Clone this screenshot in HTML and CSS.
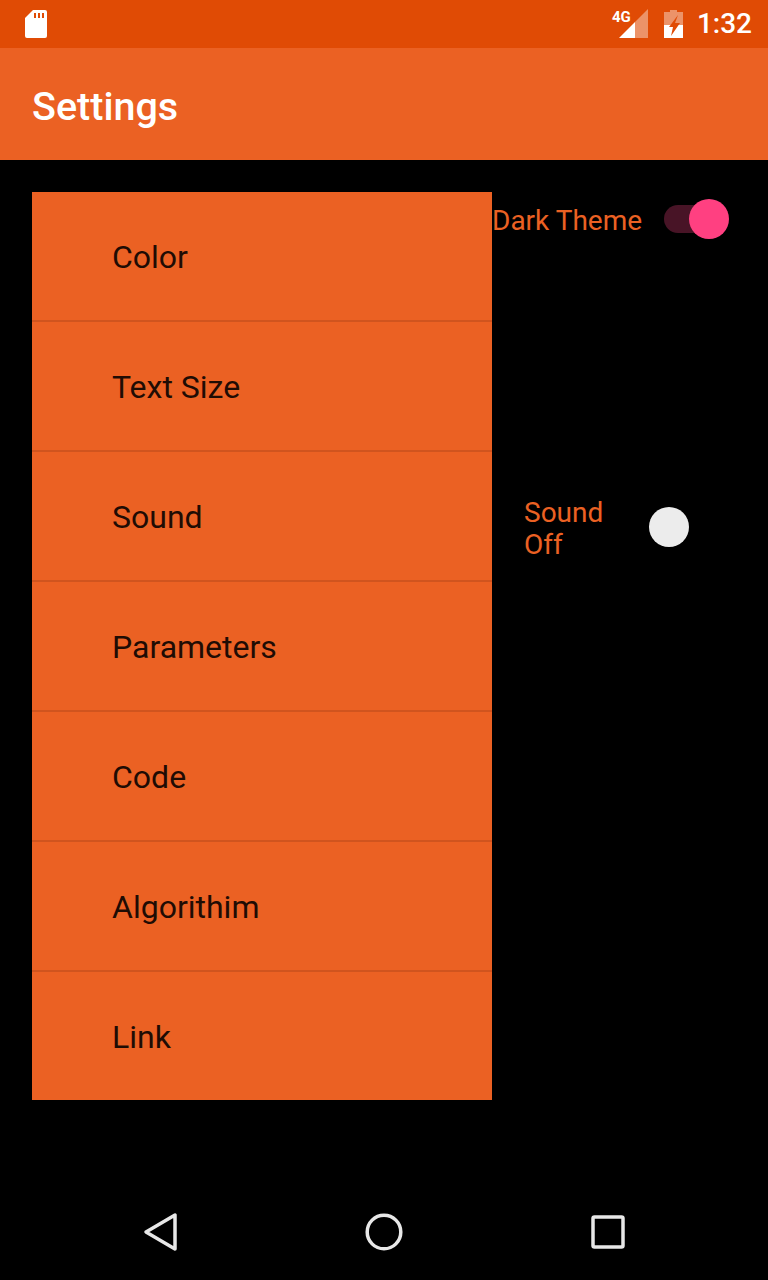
FILE: index.html
```html
<!DOCTYPE html>
<html lang="en">
<head>
  <meta charset="UTF-8">
  <meta name="viewport" content="width=device-width, initial-scale=1.0">
  <title>Settings</title>
  <link rel="stylesheet" href="styles.css">
</head>
<body>
  <div class="status-bar">
    <svg class="sd-icon" width="24" height="30" viewBox="0 0 24 30">
      <path fill-rule="evenodd" fill="#fff" d="M9 1h12a2 2 0 0 1 2 2v24a2 2 0 0 1-2 2H3a2 2 0 0 1-2-2V9zM10 4v5h2V4zM14 4v5h2V4zM18 4v5h2V4z"/>
    </svg>
    <div class="status-right">
      <div class="signal">
        <span class="net-label">4G</span>
        <svg width="30" height="30" viewBox="0 0 30 30">
          <path fill="#fff" fill-opacity="0.4" d="M30 0v29H17V13z"/>
          <path fill="#fff" d="M17 13v16H1z"/>
        </svg>
      </div>
      <svg class="battery" width="20" height="30" viewBox="0 0 20 30">
        <path fill="#fff" fill-opacity="0.4" d="M6 1h7v2h6v13H0V3h6z"/>
        <path fill="#fff" d="M0 16h19v13H0z"/>
        <path fill="#e04b05" d="M14 6L5 18h4L7 27l9-13h-5z"/>
      </svg>
      <span class="clock">1:32</span>
    </div>
  </div>

  <header class="app-bar">
    <h1>Settings</h1>
  </header>

  <main class="content">
    <ul class="menu">
      <li>Color</li>
      <li>Text Size</li>
      <li>Sound</li>
      <li>Parameters</li>
      <li>Code</li>
      <li>Algorithim</li>
      <li>Link</li>
    </ul>

    <div class="options">
      <div class="option option-theme">
        <span class="option-label">Dark Theme</span>
        <span class="switch switch-on"><span class="thumb"></span></span>
      </div>
      <div class="option option-sound">
        <span class="option-label">Sound<br>Off</span>
        <span class="switch switch-off"><span class="thumb"></span></span>
      </div>
    </div>
  </main>

  <nav class="nav-bar">
    <svg class="nav-back" width="36" height="40" viewBox="0 0 36 40">
      <path fill="none" stroke="#e8e8e8" stroke-width="3.500" stroke-linejoin="round" d="M32 3v34L3 20z"/>
    </svg>
    <svg width="40" height="40" viewBox="0 0 40 40">
      <circle cx="20" cy="20" r="16.800" fill="none" stroke="#e8e8e8" stroke-width="3.500"/>
    </svg>
    <svg width="36" height="36" viewBox="0 0 36 36">
      <rect x="3" y="3" width="30" height="30" rx="1.500" fill="none" stroke="#e8e8e8" stroke-width="3.500"/>
    </svg>
  </nav>
</body>
</html>
```

FILE: styles.css
```css
body { margin: 0; width: 768px; height: 1280px; background: #000; font-family: Roboto, sans-serif; display: flex; flex-direction: column; overflow: hidden; }

.status-bar { height: 48px; flex: none; background: #e04b05; display: flex; align-items: center; justify-content: space-between; padding: 0 16px 0 24px; box-sizing: border-box; color: #fff; }
.sd-icon { display: block; margin-top: -1px; }
.status-right { display: flex; align-items: center; }
.signal { display: flex; align-items: center; position: relative; width: 36px; height: 30px; justify-content: flex-end; margin-right: 16px; }
.net-label { position: absolute; left: 0; top: 1px; font-size: 15px; line-height: 15px; font-weight: 700; color: #fff; }
.battery { display: block; margin-right: 13px; }
.clock { font-size: 28px; font-weight: 500; line-height: 48px; }

.app-bar { height: 112px; flex: none; background: #eb6123; display: flex; align-items: center; padding: 4px 32px 0; box-sizing: border-box; }
h1 { margin: 0; font-size: 39.500px; font-weight: 500; color: #fff; }

.content { flex: 1; display: flex; align-items: flex-start; padding: 32px 32px 0; }

.menu { list-style: none; margin: 0; padding: 0; width: 460px; flex: none; background: #eb6123; }
.menu li { height: 128px; line-height: 130px; padding-left: 80px; font-size: 32px; color: #1f0c04; border-bottom: 2px solid #d0541e; }
.menu li:last-child { border-bottom: 0; }

.options { flex: 1; display: flex; flex-direction: column; }
.option { display: flex; align-items: center; color: #eb6123; font-size: 28px; white-space: nowrap; }
.option-theme { height: 54px; }
.option-sound { margin-top: 249px; padding-left: 32px; height: 64px; }
.option-label { line-height: 32px; padding-top: 4px; }

.switch { position: relative; display: block; width: 65px; height: 40px; flex: none; }
.switch-on { margin-left: 22px; }
.switch-on::before { content: ""; position: absolute; left: 0; top: 6px; width: 56px; height: 28px; border-radius: 14px; background: #481426; }
.switch-off { margin-left: 46px; }
.thumb { position: absolute; top: 0; width: 40px; height: 40px; border-radius: 50%; }
.switch-on .thumb { left: 25px; background: #ff4081; }
.switch-off .thumb { left: 0; background: #ececec; }

.nav-bar { height: 96px; flex: none; display: flex; align-items: center; justify-content: center; gap: 186px; }
.nav-back { transform: translateX(1px); }
```
